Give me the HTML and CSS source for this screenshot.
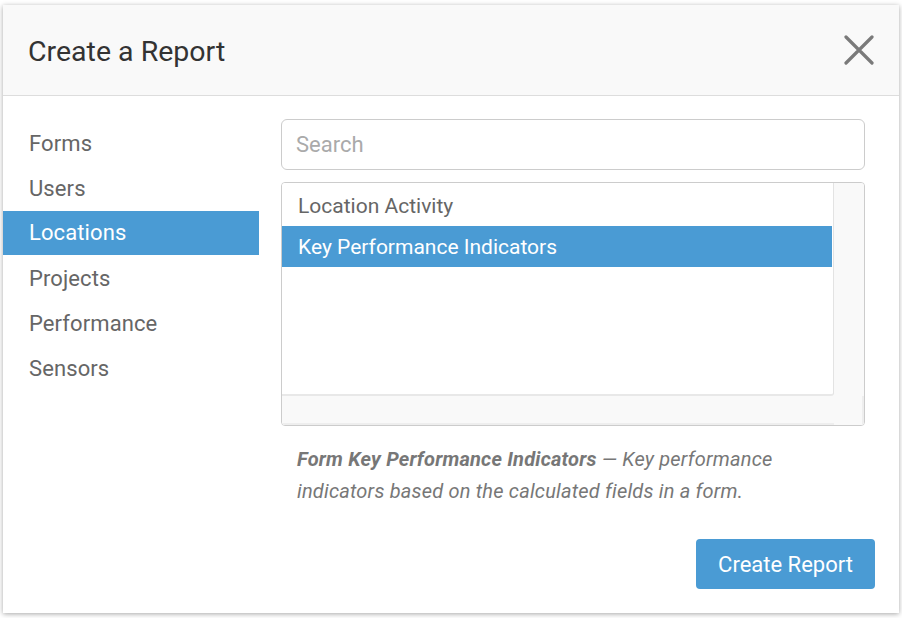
FILE: index.html
```html
<!DOCTYPE html>
<html lang="en">
<head>
    <meta charset="UTF-8">
    <meta name="viewport" content="width=device-width, initial-scale=1.0">
    <title>Create a Report</title>
    <link rel="stylesheet" href="styles.css">
</head>
<body>
    <div class="modal">
        <div class="modal-header">
            <h2 class="modal-title">Create a Report</h2>
            <button class="close-button" aria-label="Close">
                <svg width="30" height="30" viewBox="0 0 30 30">
                    <path d="M2 2 L28 28 M28 2 L2 28" stroke="#7a7a7a" stroke-width="3.2" stroke-linecap="round" fill="none"/>
                </svg>
            </button>
        </div>

        <div class="modal-body">
            <ul class="categories">
                <li>Forms</li>
                <li>Users</li>
                <li class="active">Locations</li>
                <li>Projects</li>
                <li>Performance</li>
                <li>Sensors</li>
            </ul>

            <div class="report-pane">
                <input type="text" class="search" placeholder="Search">

                <div class="report-box">
                    <ul class="report-list">
                        <li>Location Activity</li>
                        <li class="selected">Key Performance Indicators</li>
                    </ul>
                    <div class="scroll-v"></div>
                    <div class="scroll-h"></div>
                    <div class="scroll-corner"></div>
                </div>

                <p class="description">
                    <strong>Form Key Performance Indicators</strong> — Key performance indicators based on the calculated fields in a form.
                </p>
            </div>
        </div>

        <div class="modal-footer">
            <button class="create-button">Create Report</button>
        </div>
    </div>
</body>
</html>
```

FILE: styles.css
```css
body {
    margin: 0;
    background: #ffffff;
    font-family: Roboto, "Liberation Sans", sans-serif;
}

.modal {
    margin: 5px 3px;
    width: 896px;
    height: 608px;
    background: #ffffff;
    box-shadow: 0 1px 5px rgba(0, 0, 0, 0.35);
    display: flex;
    flex-direction: column;
}

.modal-header {
    height: 90px;
    background: #f9f9f9;
    border-bottom: 1px solid #dddddd;
    display: flex;
    align-items: center;
    justify-content: space-between;
    padding: 0 25px;
}

.modal-title {
    margin: 0;
    font-size: 28.5px;
    font-weight: 400;
    color: #333333;
    padding-top: 2px;
}

.close-button {
    background: none;
    border: none;
    padding: 0;
    width: 30px;
    height: 30px;
    cursor: pointer;
}

.modal-body {
    display: flex;
    flex: 1;
}

.categories {
    list-style: none;
    margin: 0;
    padding: 25px 0 0;
    width: 256px;
}

.categories li {
    height: 45px;
    line-height: 45px;
    padding-left: 26px;
    font-size: 22px;
    letter-spacing: 0.1px;
    color: #666666;
}

.categories li.active {
    background: #4a9bd4;
    color: #ffffff;
    height: 44px;
    line-height: 44px;
    margin-bottom: 1px;
}

.report-pane {
    flex: 1;
    padding: 23px 34px 0 22px;
}

.search {
    display: block;
    box-sizing: border-box;
    width: 100%;
    height: 51px;
    border: 1px solid #cccccc;
    border-radius: 6px;
    padding: 0 14px;
    font-family: Roboto, "Liberation Sans", sans-serif;
    font-size: 22px;
    color: #333333;
    outline: none;
}

.search::placeholder {
    color: #aaaaaa;
}

.report-box {
    margin-top: 12px;
    height: 244px;
    box-sizing: border-box;
    border: 1px solid #cccccc;
    border-radius: 4px;
    overflow: hidden;
    display: grid;
    grid-template-columns: 1fr 30px;
    grid-template-rows: 1fr 29px;
    background: #f9f9f9;
}

.report-list {
    list-style: none;
    margin: 0;
    padding: 2px 0 0;
    background: #ffffff;
    border-right: 1px solid #e3e3e3;
    border-bottom: 2px solid #e8e8e8;
    border-bottom-right-radius: 3px;
}

.report-list li {
    height: 41px;
    line-height: 42px;
    padding-left: 16px;
    font-size: 21px;
    color: #666666;
    margin-right: 1px;
}

.report-list li.selected {
    background: #4a9bd4;
    color: #ffffff;
}

.scroll-v,
.scroll-h,
.scroll-corner {
    background: #f9f9f9;
}

.scroll-h {
    border-bottom: 2px solid #eeeeee;
}

.scroll-corner {
    border-right: 2px solid #eeeeee;
}

.description {
    margin: 17px 0 0;
    padding: 0 16px;
    font-size: 20px;
    letter-spacing: 0.2px;
    line-height: 32px;
    font-style: italic;
    color: #777777;
}

.description strong {
    font-weight: 700;
}

.modal-footer {
    display: flex;
    justify-content: flex-end;
    padding: 0 24px 24px;
}

.create-button {
    width: 179px;
    height: 50px;
    background: #4a9bd4;
    border: none;
    border-radius: 4px;
    color: #ffffff;
    font-family: Roboto, "Liberation Sans", sans-serif;
    font-size: 22px;
    cursor: pointer;
}
```
